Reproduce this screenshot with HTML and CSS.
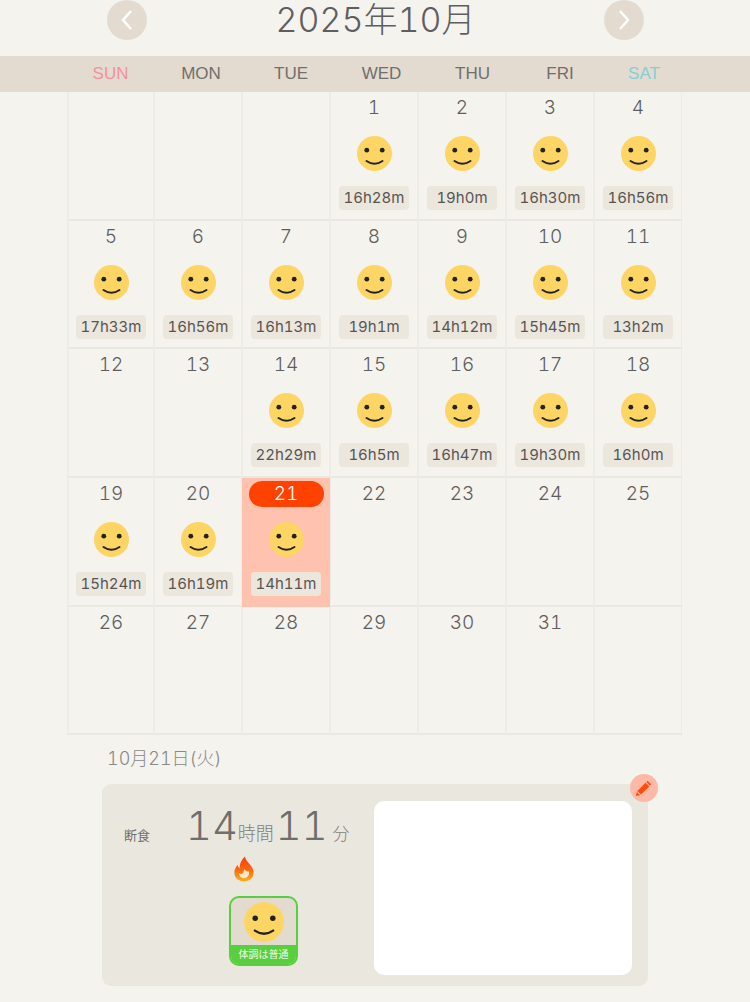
FILE: index.html
```html
<!DOCTYPE html>
<html lang="ja">
<head>
<meta charset="UTF-8">
<title>カレンダー</title>
<link rel="stylesheet" href="styles.css">
</head>
<body>
<svg class="defs" width="0" height="0">
	<symbol id="smile" viewBox="0 0 35 35">
		<circle cx="17.5" cy="17.5" r="17.5" fill="#fdd564"/>
		<circle cx="9.8" cy="14.2" r="2.4" fill="#222"/>
		<circle cx="25.2" cy="14.2" r="2.4" fill="#222"/>
		<path d="M9.5 25 Q17.5 30.5 25.5 25" fill="none" stroke="#222" stroke-width="2" stroke-linecap="round"/>
	</symbol>
	<linearGradient id="flame" x1="0" y1="0" x2="0" y2="1">
		<stop offset="0" stop-color="#f93a0c"/>
		<stop offset="0.55" stop-color="#fb6a10"/>
		<stop offset="1" stop-color="#fbb31c"/>
	</linearGradient>
</svg>

<div class="month_head">
	<button class="nav_btn"><svg width="14" height="22" viewBox="0 0 14 22"><path d="M11 2 L3 11 L11 20" fill="none" stroke="#fff" stroke-width="2.5"/></svg></button>
	<h1 class="month_title">2025年10月</h1>
	<button class="nav_btn"><svg width="14" height="22" viewBox="0 0 14 22"><path d="M3 2 L11 11 L3 20" fill="none" stroke="#fff" stroke-width="2.5"/></svg></button>
</div>

<div class="week_bar">
	<span class="sun">SUN</span><span>MON</span><span>TUE</span><span>WED</span><span>THU</span><span>FRI</span><span class="sat">SAT</span>
</div>

<div class="cal_grid">
	<div class="cell"></div>
	<div class="cell"></div>
	<div class="cell"></div>
	<div class="cell"><div class="day">1</div><svg class="face"><use href="#smile"/></svg><div class="hours">16h28m</div></div>
	<div class="cell"><div class="day">2</div><svg class="face"><use href="#smile"/></svg><div class="hours">19h0m</div></div>
	<div class="cell"><div class="day">3</div><svg class="face"><use href="#smile"/></svg><div class="hours">16h30m</div></div>
	<div class="cell"><div class="day">4</div><svg class="face"><use href="#smile"/></svg><div class="hours">16h56m</div></div>

	<div class="cell"><div class="day">5</div><svg class="face"><use href="#smile"/></svg><div class="hours">17h33m</div></div>
	<div class="cell"><div class="day">6</div><svg class="face"><use href="#smile"/></svg><div class="hours">16h56m</div></div>
	<div class="cell"><div class="day">7</div><svg class="face"><use href="#smile"/></svg><div class="hours">16h13m</div></div>
	<div class="cell"><div class="day">8</div><svg class="face"><use href="#smile"/></svg><div class="hours">19h1m</div></div>
	<div class="cell"><div class="day">9</div><svg class="face"><use href="#smile"/></svg><div class="hours">14h12m</div></div>
	<div class="cell"><div class="day">10</div><svg class="face"><use href="#smile"/></svg><div class="hours">15h45m</div></div>
	<div class="cell"><div class="day">11</div><svg class="face"><use href="#smile"/></svg><div class="hours">13h2m</div></div>

	<div class="cell"><div class="day">12</div></div>
	<div class="cell"><div class="day">13</div></div>
	<div class="cell"><div class="day">14</div><svg class="face"><use href="#smile"/></svg><div class="hours">22h29m</div></div>
	<div class="cell"><div class="day">15</div><svg class="face"><use href="#smile"/></svg><div class="hours">16h5m</div></div>
	<div class="cell"><div class="day">16</div><svg class="face"><use href="#smile"/></svg><div class="hours">16h47m</div></div>
	<div class="cell"><div class="day">17</div><svg class="face"><use href="#smile"/></svg><div class="hours">19h30m</div></div>
	<div class="cell"><div class="day">18</div><svg class="face"><use href="#smile"/></svg><div class="hours">16h0m</div></div>

	<div class="cell"><div class="day">19</div><svg class="face"><use href="#smile"/></svg><div class="hours">15h24m</div></div>
	<div class="cell"><div class="day">20</div><svg class="face"><use href="#smile"/></svg><div class="hours">16h19m</div></div>
	<div class="cell today"><div class="day">21</div><svg class="face"><use href="#smile"/></svg><div class="hours">14h11m</div></div>
	<div class="cell"><div class="day">22</div></div>
	<div class="cell"><div class="day">23</div></div>
	<div class="cell"><div class="day">24</div></div>
	<div class="cell"><div class="day">25</div></div>

	<div class="cell"><div class="day">26</div></div>
	<div class="cell"><div class="day">27</div></div>
	<div class="cell"><div class="day">28</div></div>
	<div class="cell"><div class="day">29</div></div>
	<div class="cell"><div class="day">30</div></div>
	<div class="cell"><div class="day">31</div></div>
	<div class="cell"></div>
</div>

<p class="detail_date">10月21日(火)</p>

<div class="detail_panel">
	<div class="detail_left">
		<div class="fast_row">
			<span class="fast_label">断食</span>
			<span class="fast_num">14</span><span class="fast_unit">時間</span>
			<span class="fast_num second">11</span><span class="fast_unit min">分</span>
		</div>
		<svg class="flame_icon" width="20" height="26" viewBox="0 0 20 26">
			<path d="M11 0.5 C11.5 4 14 6 16 8.5 C18.5 11.5 19.6 14 19.6 16.5 C19.6 22 15.2 25.5 10 25.5 C4.8 25.5 0.4 22 0.4 16.5 C0.4 13.5 1.8 11 3.6 9 C4 10.5 4.6 11.5 5.8 12 C5.4 8 7.5 3.5 11 0.5 Z" fill="url(#flame)"/>
			<path d="M5 17 C6.5 18.5 7.5 18.5 9 17 C9.5 15.5 10 14 10.5 13 C11.5 15 13 15.5 15 15.5 C15.6 19 13.5 22.2 10 22.2 C6.8 22.2 5 19.8 5 17 Z" fill="#fde9c8"/>
		</svg>
		<div class="condition">
			<div class="condition_face"><svg class="face_big"><use href="#smile"/></svg></div>
			<div class="condition_label">体調は普通</div>
		</div>
	</div>
	<div class="note_box"></div>
	<button class="edit_btn">
		<svg width="18" height="18" viewBox="0 0 18 18"><path d="M12.6 1.8 L16.2 5.4 L15 6.6 L11.4 3 Z M10.6 3.8 L14.2 7.4 L6 15.6 L2.4 12 Z M1.8 13 L5 16.2 L0.9 17.1 Z" fill="#ff4a0a"/></svg>
	</button>
</div>
</body>
</html>
```

FILE: styles.css
```css
html, body {
	margin: 0;
	padding: 0;
}

body {
	width: 750px;
	height: 1002px;
	overflow: hidden;
	background: #f4f3ee;
	color: #5e5e5e;
	font-family: Inter, "Noto Sans CJK JP", sans-serif;
	font-weight: 300;
	font-variant-numeric: tabular-nums;
}

.defs {
	display: block;
	height: 0;
}

.month_head {
	height: 56px;
	display: flex;
	justify-content: space-between;
	align-items: flex-start;
	padding: 0 106px 0 107px;
	box-sizing: border-box;
}

.nav_btn {
	width: 40px;
	height: 40px;
	border: none;
	border-radius: 50%;
	padding: 0;
	background: #e3dbcf;
	display: flex;
	align-items: center;
	justify-content: center;
}

.month_title {
	margin: 0;
	font-size: 34px;
	font-weight: 300;
	line-height: 40px;
}

.week_bar {
	height: 36px;
	background: #e3dbcf;
	display: grid;
	grid-template-columns: 91px 90px 90px 91px 91px 84px 84px;
	padding-left: 65px;
	font-family: "Liberation Sans", sans-serif;
	font-weight: 400;
	font-size: 17px;
	line-height: 36px;
	text-align: center;
	color: #6f6f6c;
}

.sun {
	color: #f4929c;
}

.sat {
	color: #84cfd6;
}

.cal_grid {
	display: grid;
	grid-template-columns: 87px repeat(6, 88px);
	grid-auto-rows: 128.7px;
	margin-left: 67px;
	width: 615px;
}

.cell {
	box-sizing: border-box;
	border-left: 1px solid #eeece6;
	border-right: 1px solid #eeece6;
	border-bottom: 2px solid #eae8e2;
	padding-top: 4px;
	display: flex;
	flex-direction: column;
	align-items: center;
}

.cell:nth-child(7n+1) {
	border-left-width: 2px;
}

.day {
	height: 24px;
	line-height: 24px;
	font-size: 19px;
	color: #5e5e5e;
}

.face {
	display: block;
	width: 35px;
	height: 35px;
	margin-top: 16px;
}

.hours {
	width: 70px;
	height: 24px;
	margin-top: 15px;
	line-height: 24px;
	text-align: center;
	font-size: 15px;
	font-weight: 400;
	color: #555;
	background: #ece7dd;
	border-radius: 4px;
}

.today {
	background: #fec2ae;
	border-color: #fec2ae;
	padding-top: 3px;
}

.today .day {
	width: 75px;
	height: 26px;
	line-height: 26px;
	text-align: center;
	color: #fff;
	background: #ff4200;
	border-radius: 13px;
}

.today .face {
	margin-top: 15px;
}

.detail_date {
	margin: 12px 0 0 107px;
	height: 37px;
	line-height: 24px;
	font-size: 18px;
	color: #8a8985;
}

.detail_panel {
	position: relative;
	margin-left: 102px;
	width: 546px;
	height: 202px;
	box-sizing: border-box;
	padding: 17px 16px 11px 22px;
	background: #eae8de;
	border-radius: 9px;
	display: flex;
	justify-content: space-between;
}

.detail_left {
	width: 250px;
	display: flex;
	flex-direction: column;
	align-items: flex-start;
}

.fast_row {
	display: flex;
	align-items: baseline;
	height: 55px;
	color: #6f6e6b;
}

.fast_label {
	font-size: 13px;
	font-weight: 400;
	width: 62px;
}

.fast_num {
	font-size: 40px;
	line-height: 50px;
}

.fast_num.second {
	margin-left: 2px;
}

.fast_unit {
	font-size: 18px;
	color: #7f7e7a;
}

.fast_unit.min {
	font-size: 17px;
	margin-left: 5px;
}

.flame_icon {
	display: block;
	margin: 0 0 0 110px;
}

.condition {
	margin: 14px 0 0 105px;
	width: 69px;
	height: 70px;
	box-sizing: border-box;
	border: 2px solid #57cf3f;
	border-radius: 10px;
	overflow: hidden;
	background: #e3dbcf;
	display: flex;
	flex-direction: column;
}

.condition_face {
	flex: 1;
	display: flex;
	align-items: center;
	justify-content: center;
}

.face_big {
	display: block;
	width: 40px;
	height: 40px;
}

.condition_label {
	height: 19px;
	line-height: 19px;
	background: #57cf3f;
	color: #f4f7e4;
	font-size: 10px;
	font-weight: 400;
	text-align: center;
}

.note_box {
	width: 258px;
	height: 174px;
	background: #fff;
	border-radius: 10px;
}

.edit_btn {
	position: absolute;
	top: -10px;
	right: -10px;
	width: 28px;
	height: 28px;
	padding: 0;
	border: none;
	border-radius: 50%;
	background: #fdb9a8;
	display: flex;
	align-items: center;
	justify-content: center;
}
```
